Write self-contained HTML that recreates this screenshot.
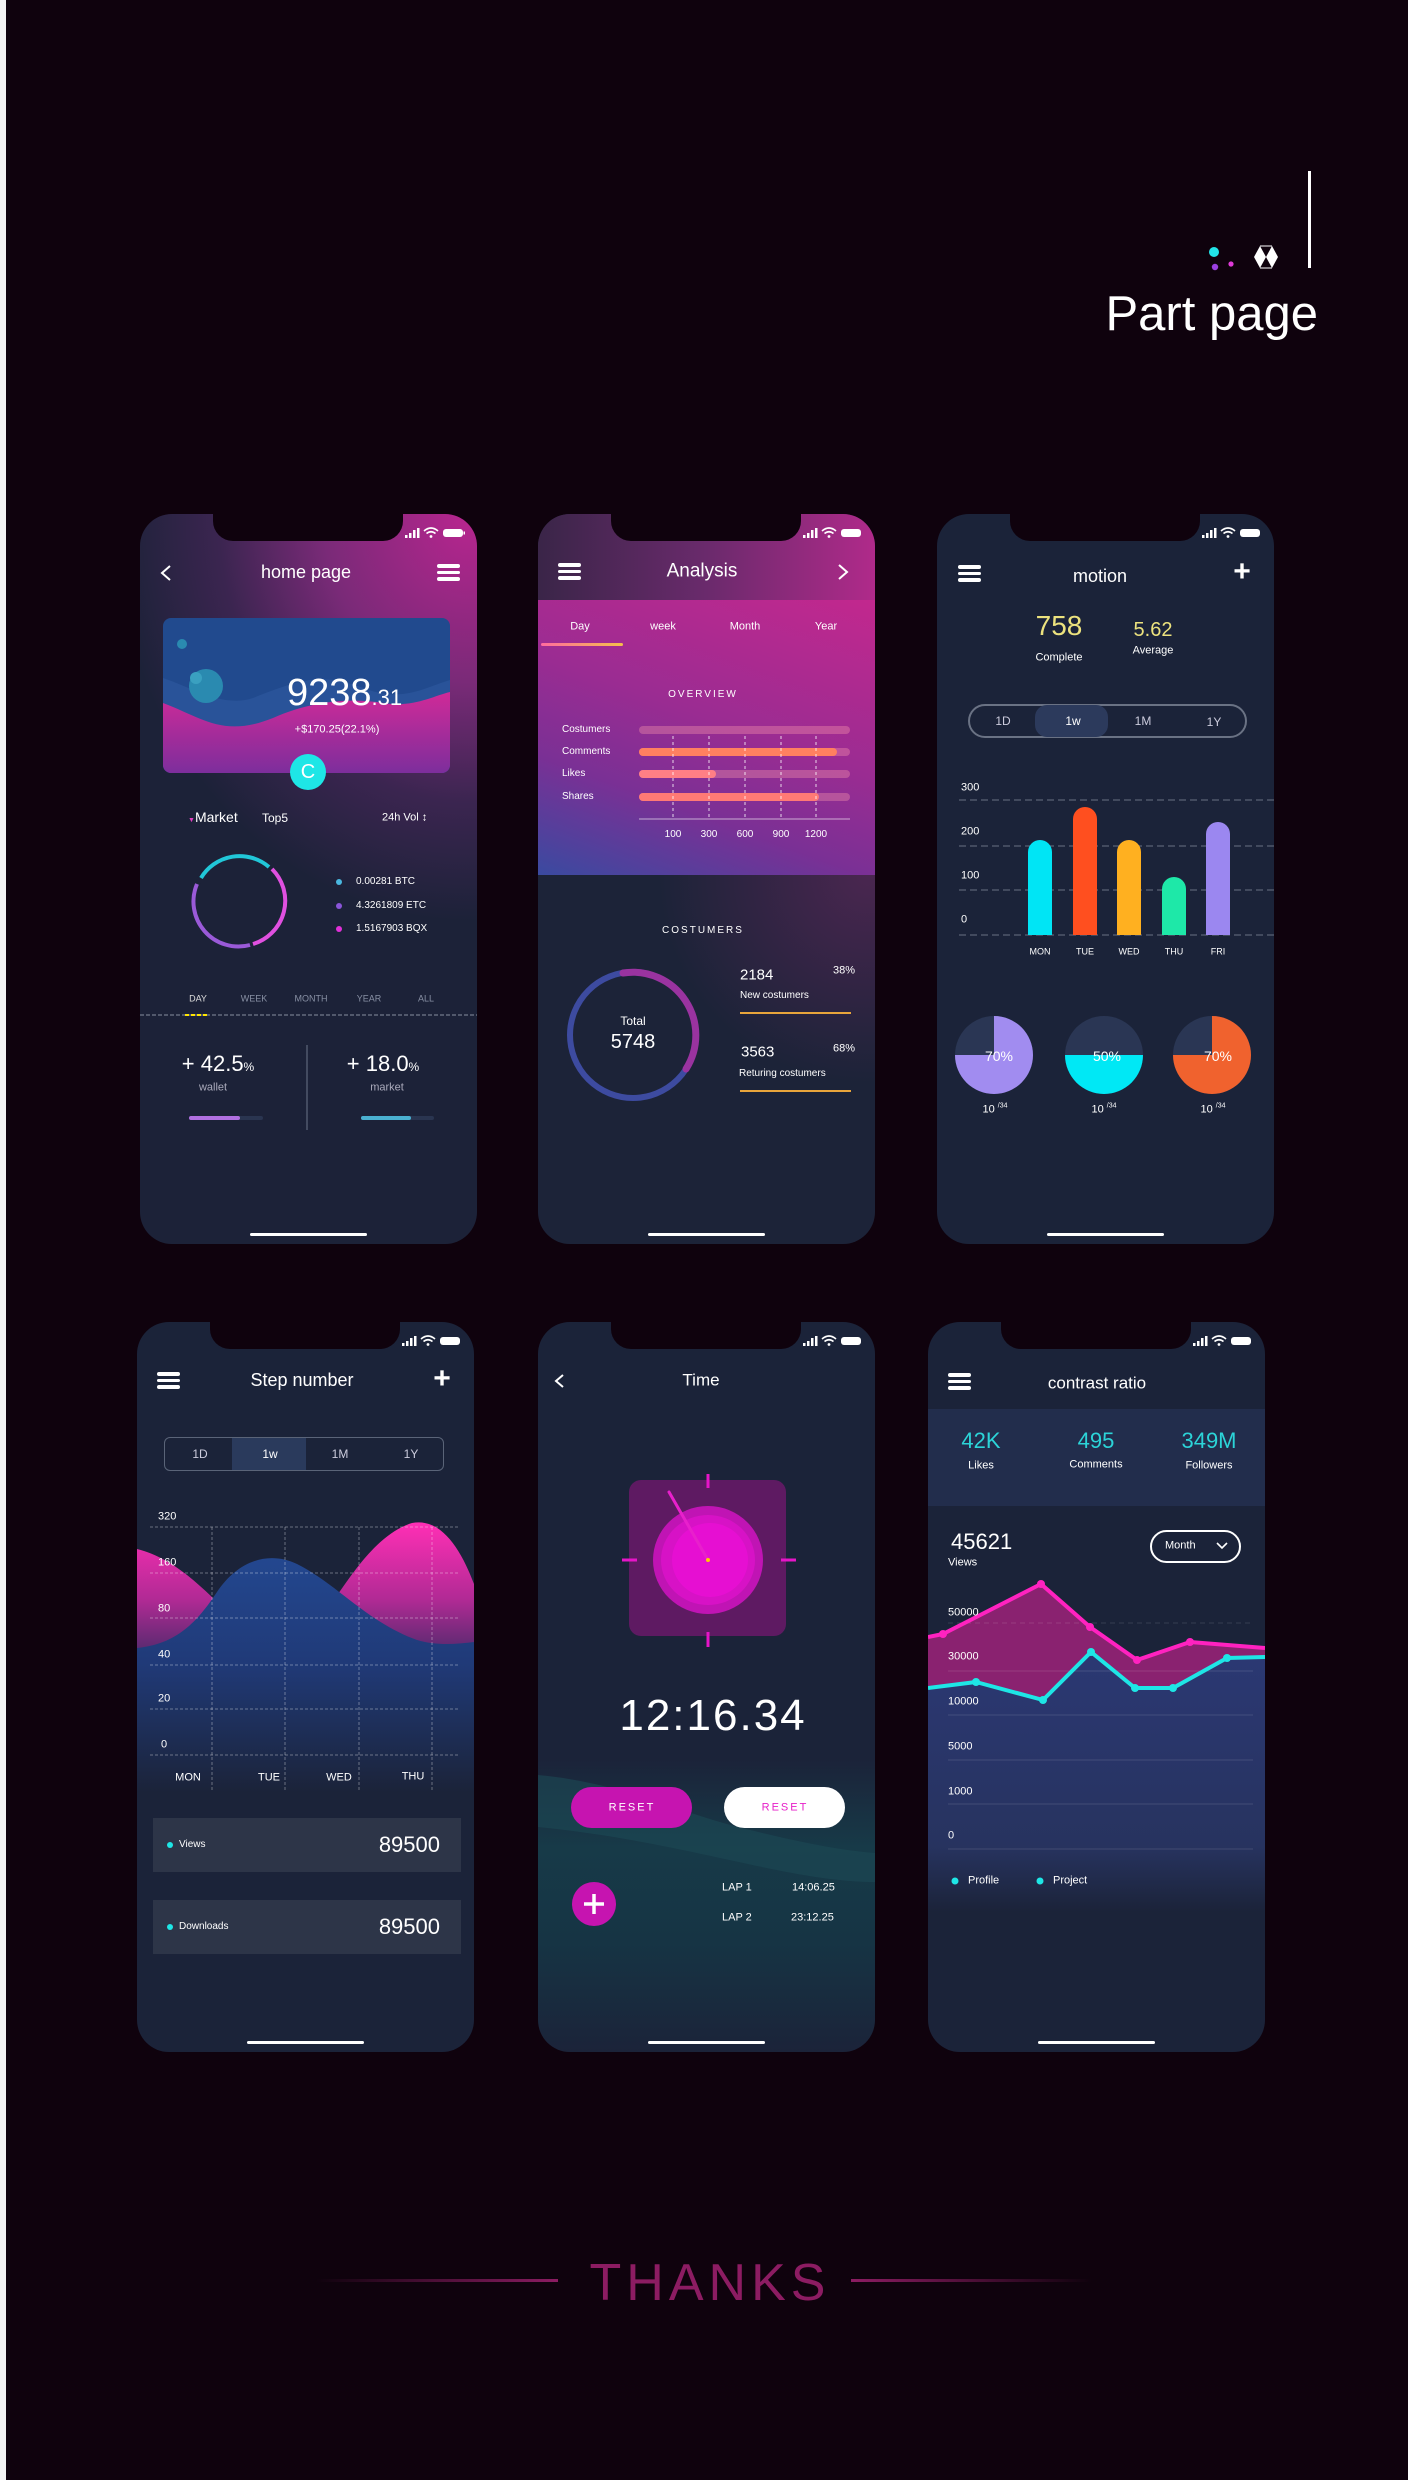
<!DOCTYPE html>
<html><head><meta charset="utf-8">
<style>
*{margin:0;padding:0;box-sizing:border-box}
html,body{width:1408px;height:2480px;background:#0f020d;overflow:hidden;font-family:"Liberation Sans",sans-serif;color:#fff}
.ph{position:absolute;width:337px;height:730px;border-radius:32px;overflow:hidden;background:#1b2339}
.notch{position:absolute;left:73px;top:0;width:190px;height:27px;background:#0f020d;border-radius:0 0 20px 20px;z-index:5}
.t{position:absolute;white-space:nowrap;line-height:1}
.c{transform:translate(-50%,-50%)}
.l{transform:translateY(-50%)}
.r{transform:translate(-100%,-50%)}
.home{position:absolute;left:110px;top:719px;width:117px;height:3px;border-radius:2px;background:#fff}
.ham{position:absolute;width:23px;height:17px}
.ham i{display:block;height:3.5px;border-radius:2px;background:#fff;margin-bottom:3px}
.st{position:absolute;left:265px;top:13px;z-index:6}
svg{position:absolute;overflow:visible}
</style></head><body>
<div style="position:absolute;left:0;top:0;width:6px;height:2480px;background:#f4f4f4"></div>

<!-- header -->
<div style="position:absolute;left:1308px;top:171px;width:3px;height:97px;background:#fff"></div>
<svg style="left:1200px;top:240px" width="100" height="35">
<circle cx="14" cy="12" r="5" fill="#22e3e8"/><circle cx="15" cy="27" r="3.2" fill="#9b3fe0"/><circle cx="31" cy="24" r="2.6" fill="#e03ad8"/>
<polygon points="54,17 60,6 66,17 60,28" fill="#fff"/><polygon points="66,17 72,6 78,17 72,28" fill="#fff"/>
<line x1="60" y1="6" x2="72" y2="6" stroke="#fff" stroke-width="1"/><line x1="60" y1="28" x2="72" y2="28" stroke="#fff" stroke-width="1"/>
</svg>
<div class="t" style="right:90px;top:290px;font-size:49px">Part page</div>

<!-- PHONE 1 -->
<div class="ph" style="left:140px;top:514px;background:radial-gradient(ellipse 420px 480px at 330px 0px,#b8258f 0%,#7a2a78 35%,#3b2550 60%,#1c2238 85%)">
<div class="notch"></div>
<svg class="st" width="60" height="12"><g fill="#fff"><rect x="0" y="8" width="2.5" height="3"/><rect x="4" y="6" width="2.5" height="5"/><rect x="8" y="3" width="2.5" height="8"/><rect x="12" y="1" width="2.5" height="10"/></g><path d="M19 4 Q26 -2 33 4 M21.5 6.5 Q26 3 30.5 6.5" stroke="#fff" stroke-width="1.6" fill="none"/><circle cx="26" cy="9.5" r="1.4" fill="#fff"/><rect x="38" y="2" width="20" height="8" rx="3" fill="#fff"/><rect x="58.5" y="4.5" width="1.5" height="3" fill="#fff"/></svg>
<svg style="left:18px;top:50px" width="16" height="18"><path d="M12 2 L4 9 L12 16" stroke="#fff" stroke-width="2" fill="none"/></svg>
<div class="t c" style="left:166px;top:58px;font-size:18px">home page</div>
<div class="ham" style="left:297px;top:50px"><i></i><i></i><i></i></div>
<div style="position:absolute;left:23px;top:104px;width:287px;height:155px;border-radius:8px;overflow:hidden;background:#214a8e">
<svg style="left:0;top:0" width="287" height="155"><defs><linearGradient id="cw" x1="0" y1="0" x2="0" y2="1"><stop offset="0" stop-color="#d02a98"/><stop offset="1" stop-color="#7d2e9c"/></linearGradient></defs>
<path d="M0 60 C30 70 60 90 90 80 C140 60 160 55 200 70 C240 85 260 70 287 62 L287 155 L0 155Z" fill="#2f5aa0" opacity=".6"/>
<path d="M0 85 C40 100 60 120 110 100 C150 82 190 80 220 85 C250 90 270 78 287 74 L287 155 L0 155Z" fill="url(#cw)"/>
<circle cx="19" cy="26" r="5" fill="#2a8ab0"/><circle cx="43" cy="68" r="17" fill="#2a8ab0"/><circle cx="33" cy="60" r="6" fill="#3aa0c0"/></svg>
<div class="t" style="left:124px;top:56px;font-size:38px">9238<span style="font-size:22px">.31</span></div>
<div class="t c" style="left:174px;top:112px;font-size:11px">+$170.25(22.1%)</div>
</div>
<div class="t c" style="left:168px;top:258px;width:36px;height:36px;border-radius:50%;background:#1ee6e6;font-size:20px;line-height:36px;text-align:center">C</div>
<div class="t l" style="left:48px;top:303px;font-size:14px"><span style="color:#e040c0;font-size:7px">▼</span>Market</div>
<div class="t l" style="left:122px;top:304px;font-size:12px">Top5</div>
<div class="t l" style="left:242px;top:304px;font-size:11px">24h Vol ↕</div>
<svg style="left:0;top:0" width="337" height="730">
<circle cx="99" cy="387" r="45" fill="none" stroke="#1c2238" stroke-width="5"/>
<path d="M 61 364 A45 45 0 0 1 129 353" stroke="#21c7d8" stroke-width="4" fill="none"/>
<path d="M 132 355 A45 45 0 0 1 113 430" stroke="#e050e0" stroke-width="4" fill="none"/>
<path d="M 110 431 A45 45 0 0 1 57 370" stroke="#9a5ad8" stroke-width="4" fill="none"/>
<circle cx="199" cy="368" r="3" fill="#4ab8e0"/><circle cx="199" cy="392" r="3" fill="#8a55d8"/><circle cx="199" cy="415" r="3" fill="#e030d8"/>
<line x1="0" y1="501" x2="337" y2="501" stroke="#8890a0" stroke-width="1" stroke-dasharray="4 2"/>
<line x1="45" y1="501" x2="69" y2="501" stroke="#ffe600" stroke-width="2" stroke-dasharray="4 2"/>
<line x1="167" y1="531" x2="167" y2="616" stroke="#50596e" stroke-width="1.5"/>
<rect x="49" y="602" width="74" height="4" rx="2" fill="#2a3550"/><rect x="49" y="602" width="51" height="4" rx="2" fill="#b070e0"/>
<rect x="221" y="602" width="73" height="4" rx="2" fill="#2a3550"/><rect x="221" y="602" width="50" height="4" rx="2" fill="#4ab0d0"/>
</svg>
<div class="t l" style="left:216px;top:368px;font-size:10px">0.00281 BTC</div>
<div class="t l" style="left:216px;top:392px;font-size:10px">4.3261809 ETC</div>
<div class="t l" style="left:216px;top:415px;font-size:10px">1.5167903 BQX</div>
<div class="t c" style="left:58px;top:485px;font-size:9px;color:#ddd">DAY</div>
<div class="t c" style="left:114px;top:485px;font-size:9px;color:#8890a4">WEEK</div>
<div class="t c" style="left:171px;top:485px;font-size:9px;color:#8890a4">MONTH</div>
<div class="t c" style="left:229px;top:485px;font-size:9px;color:#8890a4">YEAR</div>
<div class="t c" style="left:286px;top:485px;font-size:9px;color:#8890a4">ALL</div>
<div class="t c" style="left:78px;top:550px;font-size:22px">+ 42.5<span style="font-size:12px">%</span></div>
<div class="t c" style="left:73px;top:574px;font-size:11px;color:#aab">wallet</div>
<div class="t c" style="left:243px;top:550px;font-size:22px">+ 18.0<span style="font-size:12px">%</span></div>
<div class="t c" style="left:247px;top:574px;font-size:11px;color:#aab">market</div>
<div class="home"></div>
</div>

<!-- PHONE 2 -->
<div class="ph" style="left:538px;top:514px;background:radial-gradient(ellipse 300px 300px at 330px 360px,#4a2650 0%,#1c2338 70%)">
<div class="notch"></div>
<div style="position:absolute;left:0;top:0;width:337px;height:86px;background:linear-gradient(90deg,#3a2548,#6a2a6c 50%,#b02a8a)"></div>
<div style="position:absolute;left:0;top:86px;width:337px;height:275px;background:linear-gradient(20deg,#3a4aa0 0%,#7a3095 30%,#9a2c92 55%,#c2288e 100%)"></div>
<svg class="st" width="60" height="12"><g fill="#fff"><rect x="0" y="8" width="2.5" height="3"/><rect x="4" y="6" width="2.5" height="5"/><rect x="8" y="3" width="2.5" height="8"/><rect x="12" y="1" width="2.5" height="10"/></g><path d="M19 4 Q26 -2 33 4 M21.5 6.5 Q26 3 30.5 6.5" stroke="#fff" stroke-width="1.6" fill="none"/><circle cx="26" cy="9.5" r="1.4" fill="#fff"/><rect x="38" y="2" width="20" height="8" rx="3" fill="#fff"/></svg>
<div class="ham" style="left:20px;top:49px"><i></i><i></i><i></i></div>
<div class="t c" style="left:164px;top:57px;font-size:19px">Analysis</div>
<svg style="left:298px;top:49px" width="16" height="18"><path d="M3 2 L11 9 L3 16" stroke="#fff" stroke-width="2" fill="none"/></svg>
<div class="t c" style="left:42px;top:113px;font-size:11px">Day</div>
<div class="t c" style="left:125px;top:113px;font-size:11px">week</div>
<div class="t c" style="left:207px;top:113px;font-size:11px">Month</div>
<div class="t c" style="left:288px;top:113px;font-size:11px">Year</div>
<div style="position:absolute;left:3px;top:129px;width:82px;height:3px;border-radius:2px;background:linear-gradient(90deg,#ff6b9f,#f5c04a)"></div>
<div class="t c" style="left:165px;top:181px;font-size:10px;letter-spacing:2px">OVERVIEW</div>
<div class="t l" style="left:24px;top:216px;font-size:10px">Costumers</div>
<div class="t l" style="left:24px;top:238px;font-size:10px">Comments</div>
<div class="t l" style="left:24px;top:260px;font-size:10px">Likes</div>
<div class="t l" style="left:24px;top:283px;font-size:10px">Shares</div>
<svg style="left:0;top:0" width="337" height="730"><defs><linearGradient id="bg2" x1="0" x2="1"><stop offset="0" stop-color="#ff6a95"/><stop offset="1" stop-color="#f7a23a"/></linearGradient></defs>
<g stroke-linecap="round" stroke-width="8">
<line x1="105" y1="216" x2="308" y2="216" stroke="#ff9fb0" stroke-opacity=".35"/><line x1="105" y1="216" x2="308" y2="216" stroke="url(#bg2)"/>
<line x1="105" y1="238" x2="308" y2="238" stroke="#ff9fb0" stroke-opacity=".35"/><line x1="105" y1="238" x2="295" y2="238" stroke="#ff8060"/>
<line x1="105" y1="260" x2="308" y2="260" stroke="#ff9fb0" stroke-opacity=".35"/><line x1="105" y1="260" x2="174" y2="260" stroke="#ff7f85"/>
<line x1="105" y1="283" x2="308" y2="283" stroke="#ff9fb0" stroke-opacity=".35"/><line x1="105" y1="283" x2="277" y2="283" stroke="#ff7a75"/>
</g>
<g stroke="#fff" stroke-width="1" stroke-dasharray="3 3" opacity=".8"><line x1="135" y1="222" x2="135" y2="305"/><line x1="171" y1="222" x2="171" y2="305"/><line x1="207" y1="222" x2="207" y2="305"/><line x1="243" y1="222" x2="243" y2="305"/><line x1="278" y1="222" x2="278" y2="305"/></g>
<line x1="101" y1="305" x2="312" y2="305" stroke="#fff" stroke-opacity=".6"/>
<circle cx="95" cy="521" r="63" fill="none" stroke="#3d4ba0" stroke-width="6"/>
<path d="M 85 459 A63 63 0 0 1 148 555" stroke="#9a33a0" stroke-width="7" fill="none" stroke-linecap="round"/>
<line x1="202" y1="499" x2="313" y2="499" stroke="#e8a53b" stroke-width="2"/>
<line x1="202" y1="577" x2="313" y2="577" stroke="#e8a53b" stroke-width="2"/>
</svg>
<div class="t c" style="left:135px;top:321px;font-size:10px">100</div>
<div class="t c" style="left:171px;top:321px;font-size:10px">300</div>
<div class="t c" style="left:207px;top:321px;font-size:10px">600</div>
<div class="t c" style="left:243px;top:321px;font-size:10px">900</div>
<div class="t c" style="left:278px;top:321px;font-size:10px">1200</div>
<div class="t c" style="left:165px;top:417px;font-size:10px;letter-spacing:2px">COSTUMERS</div>
<div class="t c" style="left:95px;top:507px;font-size:12px">Total</div>
<div class="t c" style="left:95px;top:528px;font-size:20px">5748</div>
<div class="t l" style="left:202px;top:461px;font-size:15px">2184</div>
<div class="t r" style="left:317px;top:457px;font-size:11px">38%</div>
<div class="t l" style="left:202px;top:482px;font-size:10px">New costumers</div>
<div class="t l" style="left:203px;top:538px;font-size:15px">3563</div>
<div class="t r" style="left:317px;top:535px;font-size:11px">68%</div>
<div class="t l" style="left:201px;top:560px;font-size:10px">Returing costumers</div>
<div class="home"></div>
</div>

<!-- PHONE 3 -->
<div class="ph" style="left:937px;top:514px">
<div class="notch"></div>
<svg class="st" width="60" height="12"><g fill="#fff"><rect x="0" y="8" width="2.5" height="3"/><rect x="4" y="6" width="2.5" height="5"/><rect x="8" y="3" width="2.5" height="8"/><rect x="12" y="1" width="2.5" height="10"/></g><path d="M19 4 Q26 -2 33 4 M21.5 6.5 Q26 3 30.5 6.5" stroke="#fff" stroke-width="1.6" fill="none"/><circle cx="26" cy="9.5" r="1.4" fill="#fff"/><rect x="38" y="2" width="20" height="8" rx="3" fill="#fff"/></svg>
<div class="ham" style="left:21px;top:51px"><i></i><i></i><i></i></div>
<div class="t c" style="left:163px;top:62px;font-size:18px">motion</div>
<div class="t c" style="left:305px;top:58px;font-size:30px;font-weight:bold">+</div>
<div class="t c" style="left:122px;top:112px;font-size:28px;color:#ece27e">758</div>
<div class="t c" style="left:122px;top:144px;font-size:11px">Complete</div>
<div class="t c" style="left:216px;top:116px;font-size:20px;color:#ece27e">5.62</div>
<div class="t c" style="left:216px;top:137px;font-size:11px">Average</div>
<div style="position:absolute;left:31px;top:190px;width:279px;height:34px;border:2px solid #6a7284;border-radius:17px"></div>
<div style="position:absolute;left:98px;top:191px;width:73px;height:32px;background:#2c3a5c;border-radius:12px"></div>
<div class="t c" style="left:66px;top:207px;font-size:12px;color:#ccd">1D</div>
<div class="t c" style="left:136px;top:207px;font-size:12px">1w</div>
<div class="t c" style="left:206px;top:207px;font-size:12px;color:#ccd">1M</div>
<div class="t c" style="left:277px;top:208px;font-size:12px;color:#ccd">1Y</div>
<div class="t l" style="left:24px;top:274px;font-size:11px">300</div>
<div class="t l" style="left:24px;top:318px;font-size:11px">200</div>
<div class="t l" style="left:24px;top:362px;font-size:11px">100</div>
<div class="t l" style="left:24px;top:406px;font-size:11px">0</div>
<svg style="left:0;top:0" width="337" height="730">
<g stroke="#6a7284" stroke-dasharray="7 4" stroke-width="1"><line x1="22" y1="286" x2="337" y2="286"/><line x1="22" y1="332" x2="337" y2="332"/><line x1="22" y1="376" x2="337" y2="376"/><line x1="22" y1="421" x2="337" y2="421"/></g>
<path d="M91 421 V338 A12 12 0 0 1 115 338 V421Z" fill="#00e5f5"/>
<path d="M136 421 V305 A12 12 0 0 1 160 305 V421Z" fill="#ff4f1f"/>
<path d="M180 421 V338 A12 12 0 0 1 204 338 V421Z" fill="#ffb020"/>
<path d="M225 421 V375 A12 12 0 0 1 249 375 V421Z" fill="#1ee8a8"/>
<path d="M269 421 V320 A12 12 0 0 1 293 320 V421Z" fill="#9b87f0"/>
<circle cx="57" cy="541" r="39" fill="#2a3654"/><path d="M57 541 V502 A39 39 0 1 1 18 541Z" fill="#a18cf0"/>
<circle cx="167" cy="541" r="39" fill="#2a3654"/><path d="M128 541 A39 39 0 0 0 206 541Z" fill="#00e8f5"/>
<circle cx="275" cy="541" r="39" fill="#2a3654"/><path d="M275 541 V502 A39 39 0 1 1 236 541Z" fill="#f0622e"/>
</svg>
<div class="t c" style="left:103px;top:438px;font-size:9px">MON</div>
<div class="t c" style="left:148px;top:438px;font-size:9px">TUE</div>
<div class="t c" style="left:192px;top:438px;font-size:9px">WED</div>
<div class="t c" style="left:237px;top:438px;font-size:9px">THU</div>
<div class="t c" style="left:281px;top:438px;font-size:9px">FRI</div>
<div class="t c" style="left:62px;top:542px;font-size:14px">70%</div>
<div class="t c" style="left:170px;top:542px;font-size:14px">50%</div>
<div class="t c" style="left:281px;top:542px;font-size:14px">70%</div>
<div class="t c" style="left:58px;top:595px;font-size:11px">10 <sup style="font-size:7px">/34</sup></div>
<div class="t c" style="left:167px;top:595px;font-size:11px">10 <sup style="font-size:7px">/34</sup></div>
<div class="t c" style="left:276px;top:595px;font-size:11px">10 <sup style="font-size:7px">/34</sup></div>
<div class="home"></div>
</div>

<!-- PHONE 4 -->
<div class="ph" style="left:137px;top:1322px">
<div class="notch"></div>
<svg class="st" width="60" height="12"><g fill="#fff"><rect x="0" y="8" width="2.5" height="3"/><rect x="4" y="6" width="2.5" height="5"/><rect x="8" y="3" width="2.5" height="8"/><rect x="12" y="1" width="2.5" height="10"/></g><path d="M19 4 Q26 -2 33 4 M21.5 6.5 Q26 3 30.5 6.5" stroke="#fff" stroke-width="1.6" fill="none"/><circle cx="26" cy="9.5" r="1.4" fill="#fff"/><rect x="38" y="2" width="20" height="8" rx="3" fill="#fff"/></svg>
<div class="ham" style="left:20px;top:50px"><i></i><i></i><i></i></div>
<div class="t c" style="left:165px;top:58px;font-size:18px">Step number</div>
<div class="t c" style="left:305px;top:57px;font-size:30px;font-weight:bold">+</div>
<div style="position:absolute;left:27px;top:115px;width:280px;height:34px;border:1.5px solid #5a6478;border-radius:6px"></div>
<div style="position:absolute;left:95px;top:116px;width:74px;height:32px;background:#2a3a5c"></div>
<div class="t c" style="left:63px;top:132px;font-size:12px;color:#ccd">1D</div>
<div class="t c" style="left:133px;top:132px;font-size:12px">1w</div>
<div class="t c" style="left:203px;top:132px;font-size:12px;color:#ccd">1M</div>
<div class="t c" style="left:274px;top:132px;font-size:12px;color:#ccd">1Y</div>
<svg style="left:0;top:0" width="337" height="730"><defs>
<linearGradient id="pk" x1="0" y1="0" x2="0" y2="1"><stop offset="0" stop-color="#ff2fb5"/><stop offset=".6" stop-color="#b22a95"/><stop offset="1" stop-color="#5a2a70"/></linearGradient>
<linearGradient id="bl" x1="0" y1="0" x2="0" y2="1"><stop offset="0" stop-color="#23478f"/><stop offset=".45" stop-color="#203a78"/><stop offset="1" stop-color="#1b2339"/></linearGradient></defs>
<path d="M0 227 C40 237 70 270 100 300 L180 300 C200 280 230 215 275 201 C305 195 325 230 337 262 L337 328 L0 328Z" fill="url(#pk)"/>
<path d="M0 326 C40 322 60 300 80 270 C100 240 130 228 160 242 C200 262 230 300 280 318 C300 324 320 322 337 320 L337 470 L0 470Z" fill="url(#bl)"/>
<g stroke="#fff" stroke-opacity=".35" stroke-width="1" stroke-dasharray="3 2"><line x1="13" y1="205" x2="323" y2="205"/><line x1="13" y1="251" x2="323" y2="251"/><line x1="13" y1="296" x2="323" y2="296"/><line x1="13" y1="343" x2="323" y2="343"/><line x1="13" y1="387" x2="323" y2="387"/><line x1="13" y1="433" x2="323" y2="433"/>
<line x1="75" y1="205" x2="75" y2="470"/><line x1="148" y1="205" x2="148" y2="470"/><line x1="222" y1="205" x2="222" y2="470"/><line x1="295" y1="205" x2="295" y2="470"/></g>
<rect x="16" y="496" width="308" height="54" fill="#2d3548"/><rect x="16" y="578" width="308" height="54" fill="#2d3548"/>
<circle cx="33" cy="523" r="3" fill="#1ee6e6"/><circle cx="33" cy="605" r="3" fill="#1ee6e6"/>
</svg>
<div class="t l" style="left:21px;top:195px;font-size:11px">320</div>
<div class="t l" style="left:21px;top:241px;font-size:11px">160</div>
<div class="t l" style="left:21px;top:287px;font-size:11px">80</div>
<div class="t l" style="left:21px;top:333px;font-size:11px">40</div>
<div class="t l" style="left:21px;top:377px;font-size:11px">20</div>
<div class="t l" style="left:24px;top:423px;font-size:11px">0</div>
<div class="t c" style="left:51px;top:456px;font-size:11px">MON</div>
<div class="t c" style="left:132px;top:456px;font-size:11px">TUE</div>
<div class="t c" style="left:202px;top:456px;font-size:11px">WED</div>
<div class="t c" style="left:276px;top:455px;font-size:11px">THU</div>
<div class="t l" style="left:42px;top:523px;font-size:10px">Views</div>
<div class="t r" style="left:303px;top:523px;font-size:22px">89500</div>
<div class="t l" style="left:42px;top:605px;font-size:10px">Downloads</div>
<div class="t r" style="left:303px;top:605px;font-size:22px">89500</div>
<div class="home"></div>
</div>

<!-- PHONE 5 -->
<div class="ph" style="left:538px;top:1322px;background:linear-gradient(180deg,#1b2339 0%,#1b2339 60%,#173a48 72%,#163444 85%,#1b2339 100%)">
<div class="notch"></div>
<svg style="left:0;top:0" width="337" height="730">
<path d="M0 453 C80 460 140 490 200 505 C260 520 300 528 337 531 L337 560 C250 560 150 520 0 505Z" fill="#1d4a55" opacity=".6"/>
<rect x="91" y="158" width="157" height="156" rx="12" fill="#5e1a62"/>
<g stroke="#e615c8" stroke-width="3"><line x1="170" y1="152" x2="170" y2="166"/><line x1="170" y1="310" x2="170" y2="325"/><line x1="84" y1="238" x2="99" y2="238"/><line x1="243" y1="238" x2="258" y2="238"/></g>
<ellipse cx="170" cy="238" rx="55" ry="54" fill="#c014b4"/><ellipse cx="170" cy="238" rx="47" ry="45" fill="#d712c6"/><ellipse cx="172" cy="238" rx="38" ry="37" fill="#e60fd2"/>
<line x1="170" y1="238" x2="131" y2="170" stroke="#e820cc" stroke-width="3" stroke-linecap="round"/>
<circle cx="170" cy="238" r="2" fill="#ffcc00"/>
<rect x="33" y="465" width="121" height="41" rx="20.5" fill="#c614b0"/>
<rect x="186" y="465" width="121" height="41" rx="20.5" fill="#fff"/>
<circle cx="56" cy="582" r="22" fill="#c614b0"/>
<path d="M56 572 V592 M46 582 H66" stroke="#fff" stroke-width="3.5"/>
</svg>
<svg class="st" width="60" height="12"><g fill="#fff"><rect x="0" y="8" width="2.5" height="3"/><rect x="4" y="6" width="2.5" height="5"/><rect x="8" y="3" width="2.5" height="8"/><rect x="12" y="1" width="2.5" height="10"/></g><path d="M19 4 Q26 -2 33 4 M21.5 6.5 Q26 3 30.5 6.5" stroke="#fff" stroke-width="1.6" fill="none"/><circle cx="26" cy="9.5" r="1.4" fill="#fff"/><rect x="38" y="2" width="20" height="8" rx="3" fill="#fff"/></svg>
<svg style="left:14px;top:51px" width="16" height="18"><path d="M11 2 L4 8 L11 14" stroke="#fff" stroke-width="2" fill="none"/></svg>
<div class="t c" style="left:163px;top:58px;font-size:17px">Time</div>
<div class="t c" style="left:175px;top:394px;font-size:44px;letter-spacing:2px">12:16.34</div>
<div class="t c" style="left:94px;top:486px;font-size:11px;letter-spacing:2px">RESET</div>
<div class="t c" style="left:247px;top:486px;font-size:11px;letter-spacing:2px;color:#e620c8">RESET</div>
<div class="t l" style="left:184px;top:566px;font-size:11px">LAP 1</div>
<div class="t l" style="left:254px;top:566px;font-size:11px">14:06.25</div>
<div class="t l" style="left:184px;top:596px;font-size:11px">LAP 2</div>
<div class="t l" style="left:253px;top:596px;font-size:11px">23:12.25</div>
<div class="home"></div>
</div>

<!-- PHONE 6 -->
<div class="ph" style="left:928px;top:1322px">
<div class="notch"></div>
<div style="position:absolute;left:0;top:87px;width:337px;height:97px;background:#222d4c"></div>
<svg style="left:0;top:0" width="337" height="730"><defs><linearGradient id="ar" x1="0" y1="0" x2="0" y2="1"><stop offset="0" stop-color="#2b3873"/><stop offset=".75" stop-color="#27335f"/><stop offset="1" stop-color="#1b2339"/></linearGradient></defs>
<path d="M0 366 L48 360 L115 378 L163 330 L207 366 L245 366 L299 336 L337 335 L337 590 L0 590Z" fill="url(#ar)"/>
<path d="M0 315 L15 312 L113 262 L162 305 L209 338 L262 320 L337 326 L337 335 L299 336 L245 366 L207 366 L163 330 L115 378 L48 360 L0 366Z" fill="#8a2270"/>
<g stroke="#fff" stroke-opacity=".12"><line x1="20" y1="301" x2="325" y2="301" stroke-dasharray="5 4"/><line x1="20" y1="349" x2="325" y2="349"/><line x1="20" y1="393" x2="325" y2="393"/><line x1="20" y1="438" x2="325" y2="438"/><line x1="20" y1="482" x2="325" y2="482"/><line x1="20" y1="527" x2="325" y2="527"/></g>
<polyline points="0,315 15,312 113,262 162,305 209,338 262,320 337,326" fill="none" stroke="#ff22c0" stroke-width="4" stroke-linejoin="round"/>
<polyline points="0,366 48,360 115,378 163,330 207,366 245,366 299,336 337,335" fill="none" stroke="#1ee6e6" stroke-width="4" stroke-linejoin="round"/>
<g fill="#ff22c0"><circle cx="15" cy="312" r="4"/><circle cx="113" cy="262" r="4"/><circle cx="162" cy="305" r="4"/><circle cx="209" cy="338" r="4"/><circle cx="262" cy="320" r="4"/></g>
<g fill="#1ee6e6"><circle cx="48" cy="360" r="4"/><circle cx="115" cy="378" r="4"/><circle cx="163" cy="330" r="4"/><circle cx="207" cy="366" r="4"/><circle cx="245" cy="366" r="4"/><circle cx="299" cy="336" r="4"/></g>
<rect x="223" y="209" width="89" height="31" rx="15.5" fill="none" stroke="#fff" stroke-width="2"/>
<path d="M289 221 L294 226 L299 221" stroke="#fff" stroke-width="1.6" fill="none"/>
<circle cx="27" cy="559" r="3.5" fill="#1ee6e6"/><circle cx="112" cy="559" r="3.5" fill="#1ee6e6"/>
</svg>
<svg class="st" width="60" height="12"><g fill="#fff"><rect x="0" y="8" width="2.5" height="3"/><rect x="4" y="6" width="2.5" height="5"/><rect x="8" y="3" width="2.5" height="8"/><rect x="12" y="1" width="2.5" height="10"/></g><path d="M19 4 Q26 -2 33 4 M21.5 6.5 Q26 3 30.5 6.5" stroke="#fff" stroke-width="1.6" fill="none"/><circle cx="26" cy="9.5" r="1.4" fill="#fff"/><rect x="38" y="2" width="20" height="8" rx="3" fill="#fff"/></svg>
<div class="ham" style="left:20px;top:51px"><i></i><i></i><i></i></div>
<div class="t c" style="left:169px;top:61px;font-size:17px">contrast ratio</div>
<div class="t c" style="left:53px;top:119px;font-size:22px;color:#2cd4d8">42K</div>
<div class="t c" style="left:53px;top:144px;font-size:11px">Likes</div>
<div class="t c" style="left:168px;top:119px;font-size:22px;color:#2cd4d8">495</div>
<div class="t c" style="left:168px;top:143px;font-size:11px">Comments</div>
<div class="t c" style="left:281px;top:119px;font-size:22px;color:#2cd4d8">349M</div>
<div class="t c" style="left:281px;top:144px;font-size:11px">Followers</div>
<div class="t l" style="left:23px;top:220px;font-size:22px">45621</div>
<div class="t l" style="left:20px;top:241px;font-size:11px">Views</div>
<div class="t l" style="left:237px;top:224px;font-size:11px">Month</div>
<div class="t l" style="left:20px;top:291px;font-size:11px">50000</div>
<div class="t l" style="left:20px;top:335px;font-size:11px">30000</div>
<div class="t l" style="left:20px;top:380px;font-size:11px">10000</div>
<div class="t l" style="left:20px;top:425px;font-size:11px">5000</div>
<div class="t l" style="left:20px;top:470px;font-size:11px">1000</div>
<div class="t l" style="left:20px;top:514px;font-size:11px">0</div>
<div class="t l" style="left:40px;top:559px;font-size:11px">Profile</div>
<div class="t l" style="left:125px;top:559px;font-size:11px">Project</div>
<div class="home"></div>
</div>

<!-- THANKS -->
<div style="position:absolute;left:316px;top:2279px;width:242px;height:3px;background:linear-gradient(90deg,rgba(140,28,98,0),#8c1c62)"></div>
<div style="position:absolute;left:851px;top:2279px;width:241px;height:3px;background:linear-gradient(90deg,#8c1c62,rgba(140,28,98,0))"></div>
<div class="t c" style="left:710px;top:2283px;font-size:52px;letter-spacing:5px;color:#8c1c62">THANKS</div>
</body></html>
